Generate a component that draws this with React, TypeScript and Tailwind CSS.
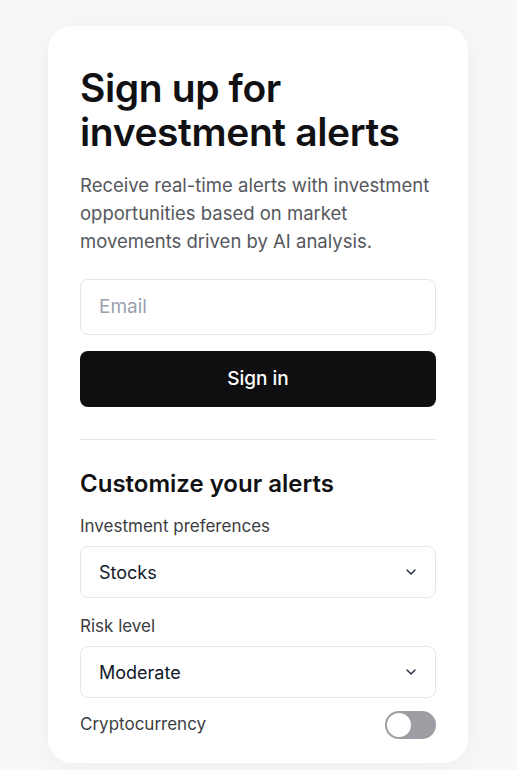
import { ChevronDown } from "lucide-react";

const Select = ({ value }: { value: string }) => {
  return (
    <div className="flex h-[52px] items-center justify-between rounded-lg border border-gray-200 bg-white pl-[18px] pr-4">
      <span className="text-[18px] text-gray-900">{value}</span>
      <ChevronDown className="h-4 w-4 text-gray-800" strokeWidth={2} />
    </div>
  );
};

export default function App() {
  return (
    <div
      className="min-h-[770px] bg-[#f8f8f8] pt-[26px] px-12"
      style={{ fontFamily: "Inter, 'Noto Sans', sans-serif" }}
    >
      <div className="w-[420px] rounded-[24px] bg-white px-8 pt-[40px] pb-6 shadow-[0_4px_28px_rgba(0,0,0,0.05)]">
        <h1 className="text-[39px] font-semibold leading-[44px] tracking-[-0.01em] text-[#111113]">
          Sign up for
          <br />
          investment alerts
        </h1>
        <p className="mt-[17px] text-[18.5px] leading-[28px] text-[#55575c]">
          Receive real-time alerts with investment opportunities based on market
          movements driven by AI analysis.
        </p>

        <div className="mt-[24px] flex h-[56px] items-center rounded-lg border border-gray-200 pl-[18px]">
          <span className="text-[19px] text-gray-400">Email</span>
        </div>
        <button className="mt-4 flex h-[56px] w-full items-center justify-center rounded-lg bg-[#0f0f11] text-[19px] font-medium text-white">
          Sign in
        </button>

        <div className="mt-8 border-t border-gray-200" />

        <h2 className="mt-[28px] text-[24px] font-semibold leading-8 text-[#111113]">
          Customize your alerts
        </h2>

        <div className="mt-[14px] text-[17px] leading-6 text-[#3b3d42]">Investment preferences</div>
        <div className="mt-[8px]">
          <Select value="Stocks" />
        </div>

        <div className="mt-[16px] text-[17px] leading-6 text-[#3b3d42]">Risk level</div>
        <div className="mt-[8px]">
          <Select value="Moderate" />
        </div>

        <div className="mt-[13px] flex items-center justify-between">
          <span className="text-[17px] text-[#3b3d42]">Cryptocurrency</span>
          <div className="flex h-[28px] w-[51px] items-center rounded-full bg-[#9c9ea3] p-[2px]">
            <div className="h-6 w-6 rounded-full bg-white" />
          </div>
        </div>
      </div>
    </div>
  );
}
